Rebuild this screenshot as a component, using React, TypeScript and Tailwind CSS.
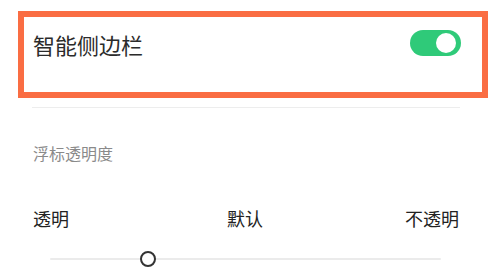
import React from "react";

const cjk = { fontFamily: '"Noto Sans CJK SC", "Noto Sans", sans-serif' };

const Toggle = () => (
  <div className="flex h-[26px] w-[51px] items-center justify-end rounded-full bg-[#2fca79] pr-[5px]">
    <div className="h-[20px] w-[20px] rounded-full bg-white" />
  </div>
);

const OpacitySlider = ({ value }: { value: number }) => (
  <div className="relative ml-[50px] mt-[23px] h-[16px] w-[391px]">
    <div className="absolute left-0 right-0 top-[7px] h-[2px] rounded bg-[#ebebeb]" />
    <div
      className="absolute top-0 h-[16px] w-[16px] -translate-x-1/2 rounded-full border-[2.5px] border-[#333333] bg-white"
      style={{ left: `${value}%` }}
    />
  </div>
);

export default function App() {
  return (
    <div className="h-[274px] w-[500px] overflow-hidden bg-white" style={cjk}>
      <div className="pt-[11px]">
        <div className="ml-[18px] h-[87px] w-[470px] border-[6px] border-[#fa6d43]">
          <div className="mt-[13px] flex h-[26px] items-center justify-between pl-[9px] pr-[21px]">
            <span className="pt-[2px] text-[22px] leading-none text-[#2b2b2b]">智能侧边栏</span>
            <Toggle />
          </div>
        </div>
      </div>
      <div className="ml-[32px] mt-[9px] h-px w-[428px] bg-[#ededed]" />
      <div className="ml-[33px] mt-[36px] text-[16px] leading-[18px] text-[#8a8a8a]">浮标透明度</div>
      <div className="ml-[33px] mr-[41px] mt-[46px] flex items-center justify-between text-[18px] leading-[20px] text-[#222222]">
        <span>透明</span>
        <span className="pl-[16px]">默认</span>
        <span>不透明</span>
      </div>
      <OpacitySlider value={25} />
    </div>
  );
}
